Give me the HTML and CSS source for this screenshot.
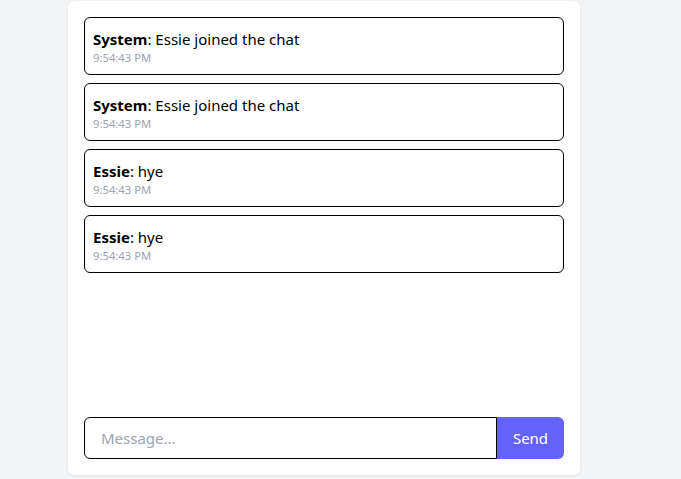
FILE: index.html
```html
<!DOCTYPE html>
<html>
<head>
<meta charset="utf-8">
<link rel="stylesheet" href="styles.css">
</head>
<body>
<div class="card">
  <div class="messages">
    <div class="msg"><div class="line"><b>System</b>: Essie joined the chat</div><div class="time">9:54:43 PM</div></div>
    <div class="msg"><div class="line"><b>System</b>: Essie joined the chat</div><div class="time">9:54:43 PM</div></div>
    <div class="msg"><div class="line"><b>Essie</b>: hye</div><div class="time">9:54:43 PM</div></div>
    <div class="msg"><div class="line"><b>Essie</b>: hye</div><div class="time">9:54:43 PM</div></div>
  </div>
  <form class="composer">
    <input class="input" type="text" placeholder="Message...">
    <button class="send" type="button">Send</button>
  </form>
</div>
</body>
</html>
```
FILE: styles.css
```css
html, body {
  margin: 0;
  padding: 0;
  background: #f3f4f6;
  height: 100%;
  overflow: hidden;
}
body {
  font-family: "Noto Sans", "Open Sans", sans-serif;
  color: #000;
  padding-top: 1px;
}
.card {
  margin-left: 68px;
  width: 512px;
  height: 474px;
  box-sizing: border-box;
  background: #fff;
  border-radius: 6px;
  box-shadow: 0 1px 3px rgba(0,0,0,0.08);
  padding: 16px;
  display: flex;
  flex-direction: column;
}
.messages {
  flex: 1;
  display: flex;
  flex-direction: column;
  gap: 8px;
}
.msg {
  border: 1px solid #000;
  border-radius: 6px;
  padding: 8px;
}
.line {
  font-size: 15px;
  line-height: 24px;
  padding-top: 1px;
  height: 23px;
}
.line b { font-weight: 700; }
.time {
  font-size: 11.25px;
  line-height: 16px;
  color: #9ca3af;
}
.composer {
  display: flex;
  margin: 0;
}
.input {
  flex: 1;
  font: inherit;
  font-size: 15px;
  line-height: 24px;
  padding: 8px 16px;
  border: 1px solid #000;
  border-radius: 6px 0 0 6px;
  outline: none;
  min-width: 0;
}
.input::placeholder { color: #9ca3af; }
.send {
  font: inherit;
  font-size: 15px;
  line-height: 24px;
  background: #6461fd;
  color: #fff;
  border: none;
  border-radius: 0 6px 6px 0;
  width: 67px;
  padding: 0;
}
```
